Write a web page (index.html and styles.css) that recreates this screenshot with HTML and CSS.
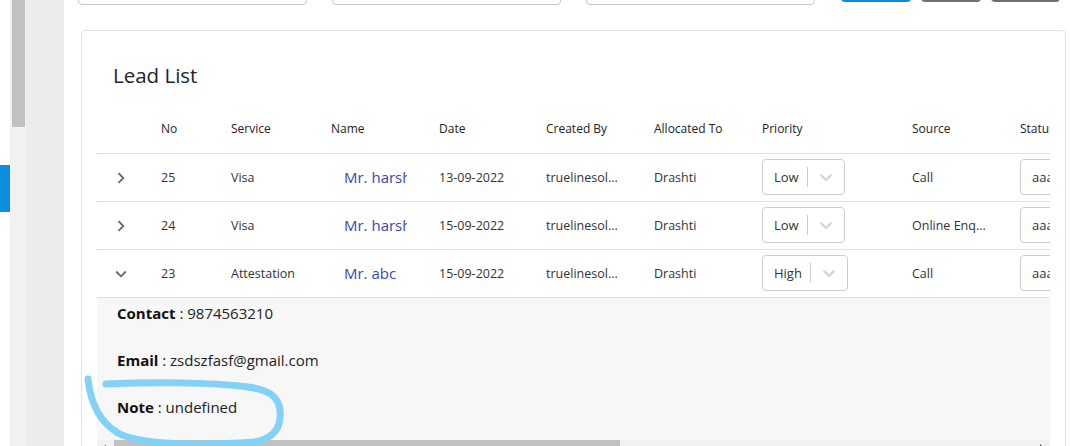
FILE: index.html
```html
<!DOCTYPE html>
<html lang="en">
<head>
<meta charset="utf-8">
<title>Lead List</title>
<link rel="stylesheet" href="styles.css">
</head>
<body>
<div class="page">
  <aside class="sidebar"><div class="active-marker"></div></aside>
  <div class="side-scroll"><div class="side-thumb"></div></div>
  <div class="gutter"></div>
  <main class="main">
    <div class="filters">
      <div class="filter-input"></div>
      <div class="filter-input"></div>
      <div class="filter-input"></div>
      <div class="btns">
        <div class="btn btn-primary"></div>
        <div class="btn btn-secondary"></div>
        <div class="btn btn-secondary w69"></div>
      </div>
    </div>
    <section class="card">
      <h2 class="card-title">Lead List</h2>
      <div class="table-scroll">
        <table class="leads">
          <colgroup>
            <col class="c-exp"><col class="c-no"><col class="c-service"><col class="c-name"><col class="c-date"><col class="c-created"><col class="c-alloc"><col class="c-priority"><col class="c-source"><col class="c-status"><col class="c-rest">
          </colgroup>
          <thead>
            <tr><th></th><th>No</th><th>Service</th><th>Name</th><th>Date</th><th>Created By</th><th>Allocated To</th><th>Priority</th><th>Source</th><th>Status</th><th>Action</th></tr>
          </thead>
          <tbody>
            <tr>
              <td class="exp"><svg width="8" height="12" viewBox="0 0 8 12"><path d="M1.5 1.2 L6.3 6 L1.5 10.8" fill="none" stroke="#666" stroke-width="1.8"/></svg></td>
              <td>25</td><td>Visa</td><td class="name"><span class="name-link">Mr. harsh patel</span></td><td>13-09-2022</td><td>truelinesol...</td><td>Drashti</td>
              <td><div class="select"><span class="sel-val">Low</span><span class="sel-sep"></span><span class="sel-ind"><svg width="20" height="20" viewBox="0 0 20 20"><path d="M4.516 7.548c0.436-0.446 1.043-0.481 1.576 0l3.908 3.747 3.908-3.747c0.533-0.481 1.141-0.446 1.574 0 0.436 0.445 0.408 1.197 0 1.615-0.406 0.418-4.695 4.502-4.695 4.502-0.217 0.223-0.502 0.335-0.787 0.335s-0.57-0.112-0.789-0.335c0 0-4.287-4.084-4.695-4.502s-0.436-1.17 0-1.615z" fill="#d4d4d4"/></svg></span></div></td>
              <td>Call</td><td><div class="status-input">aaa</div></td><td></td>
            </tr>
            <tr>
              <td class="exp"><svg width="8" height="12" viewBox="0 0 8 12"><path d="M1.5 1.2 L6.3 6 L1.5 10.8" fill="none" stroke="#666" stroke-width="1.8"/></svg></td>
              <td>24</td><td>Visa</td><td class="name"><span class="name-link">Mr. harsh patel</span></td><td>15-09-2022</td><td>truelinesol...</td><td>Drashti</td>
              <td><div class="select"><span class="sel-val">Low</span><span class="sel-sep"></span><span class="sel-ind"><svg width="20" height="20" viewBox="0 0 20 20"><path d="M4.516 7.548c0.436-0.446 1.043-0.481 1.576 0l3.908 3.747 3.908-3.747c0.533-0.481 1.141-0.446 1.574 0 0.436 0.445 0.408 1.197 0 1.615-0.406 0.418-4.695 4.502-4.695 4.502-0.217 0.223-0.502 0.335-0.787 0.335s-0.57-0.112-0.789-0.335c0 0-4.287-4.084-4.695-4.502s-0.436-1.17 0-1.615z" fill="#d4d4d4"/></svg></span></div></td>
              <td>Online Enq...</td><td><div class="status-input">aaa</div></td><td></td>
            </tr>
            <tr>
              <td class="exp"><svg width="12" height="8" viewBox="0 0 12 8"><path d="M1.2 1.5 L6 6.3 L10.8 1.5" fill="none" stroke="#666" stroke-width="1.8"/></svg></td>
              <td>23</td><td>Attestation</td><td class="name"><span class="name-link">Mr. abc</span></td><td>15-09-2022</td><td>truelinesol...</td><td>Drashti</td>
              <td><div class="select"><span class="sel-val">High</span><span class="sel-sep"></span><span class="sel-ind"><svg width="20" height="20" viewBox="0 0 20 20"><path d="M4.516 7.548c0.436-0.446 1.043-0.481 1.576 0l3.908 3.747 3.908-3.747c0.533-0.481 1.141-0.446 1.574 0 0.436 0.445 0.408 1.197 0 1.615-0.406 0.418-4.695 4.502-4.695 4.502-0.217 0.223-0.502 0.335-0.787 0.335s-0.57-0.112-0.789-0.335c0 0-4.287-4.084-4.695-4.502s-0.436-1.17 0-1.615z" fill="#d4d4d4"/></svg></span></div></td>
              <td>Call</td><td><div class="status-input">aaa</div></td><td></td>
            </tr>
            <tr class="expanded">
              <td colspan="11">
                <div class="details">
                  <p><b>Contact</b> : 9874563210</p>
                  <p><b>Email</b> : zsdszfasf@gmail.com</p>
                  <p><b>Note</b> : undefined</p>
                </div>
              </td>
            </tr>
          </tbody>
        </table>
      </div>
      <div class="hscroll">
        <span class="hs-arrow left"></span>
        <div class="hs-track"><div class="hs-thumb"></div></div>
        <span class="hs-arrow right"></span>
      </div>
    </section>
  </main>
</div>
<svg class="annotation" width="1070" height="446" viewBox="0 0 1070 446">
  <path d="M88 379 C90 398, 96 420, 118 433 C140 445, 200 446, 254 442 C273 439, 282 428, 280 410 C278 396, 269 390, 248 387 C210 382, 150 382, 106 384" fill="none" stroke="#82d2f6" stroke-width="7" stroke-linecap="round" stroke-linejoin="round"/>
</svg>
</body>
</html>
```

FILE: styles.css
```css
* { box-sizing: border-box; }
html, body { margin: 0; padding: 0; }
body {
  width: 1070px;
  height: 446px;
  overflow: hidden;
  font-family: "Open Sans", "Noto Sans", sans-serif;
  color: #333;
  background: #fff;
  position: relative;
}
.page {
  display: flex;
  height: 446px;
}
.sidebar {
  width: 10px;
  background: #fff;
  flex: none;
}
.active-marker {
  margin-top: 165px;
  height: 47px;
  background: #0a8fe0;
}
.side-scroll {
  width: 16px;
  background: #f1f1f1;
  flex: none;
  padding-left: 2px;
}
.side-thumb {
  width: 13px;
  height: 127px;
  background: #c1c1c1;
}
.gutter {
  width: 38px;
  background: #ebecee;
  flex: none;
}
.main {
  flex: 1;
  background: #fff;
  padding-left: 14px;
  min-width: 0;
}
.filters {
  height: 5px;
  display: flex;
  align-items: flex-end;
  gap: 25px;
  overflow: hidden;
}
.filter-input {
  width: 229px;
  height: 38px;
  border: 1px solid #c8c8c8;
  border-radius: 4px;
  flex: none;
}
.btns {
  display: flex;
  gap: 10px;
  align-items: flex-end;
  margin-left: 1px;
  margin-bottom: 3px;
}
.btn {
  width: 60px;
  height: 36px;
  border-radius: 4px;
  border: 1px solid #6c757d;
}
.btn-primary {
  width: 70px;
  border-color: #0d8bd9;
  border-bottom-width: 2px;
}
.btn-secondary { border-color: #707070; border-bottom-width: 2px; }
.w69 { width: 69px; }
.card {
  margin-top: 25px;
  margin-left: 3px;
  width: 985px;
  height: 430px;
  border: 1px solid #e2e2e2;
  border-radius: 4px;
  padding: 0 15px;
  display: flex;
  flex-direction: column;
}
.card-title {
  margin: 0;
  padding: 30px 16px 16px;
  font-size: 20.5px;
  line-height: 28px;
  font-weight: 400;
  color: #212529;
}
.table-scroll {
  overflow: hidden;
  width: 953px;
}
.leads {
  width: 1500px;
  table-layout: fixed;
  border-collapse: collapse;
}
.c-exp { width: 48px; }
.c-no { width: 70px; }
.c-service { width: 100px; }
.c-name { width: 108px; }
.c-date { width: 107px; }
.c-created { width: 108px; }
.c-alloc { width: 108px; }
.c-priority { width: 150px; }
.c-source { width: 108px; }
.c-status { width: 200px; }
.c-rest { width: 393px; }
.leads th, .leads td {
  height: 48px;
  padding: 0 16px;
  text-align: left;
  vertical-align: middle;
  border-bottom: 1px solid #e0e0e0;
  white-space: nowrap;
  overflow: hidden;
}
.leads th {
  font-size: 12px;
  font-weight: 400;
  color: #222;
}
.leads td {
  font-size: 12.5px;
  color: #333;
}
.leads td.exp {
  padding: 0;
  text-align: center;
}
.exp svg { display: inline-block; vertical-align: middle; }
.leads td.name { overflow: hidden; }
.name-link {
  display: block;
  padding-left: 13px;
  font-size: 15px;
  color: #3949ab;
  overflow: hidden;
  white-space: nowrap;
}
.select {
  display: inline-flex;
  align-items: center;
  height: 36px;
  border: 1px solid #cccccc;
  border-radius: 4px;
  background: #fff;
}
.sel-val {
  padding: 0 8px 0 11px;
  font-size: 13px;
  color: #333;
}
.sel-sep {
  width: 1px;
  height: 20px;
  background: #cccccc;
}
.sel-ind {
  display: flex;
  padding: 0 8px;
}
.status-input {
  width: 160px;
  height: 36px;
  border: 1px solid #cccccc;
  border-radius: 4px;
  padding: 0 11px;
  display: flex;
  align-items: center;
  font-size: 13px;
}
.leads tr.expanded td {
  height: auto;
  padding: 0;
  background: #f7f7f7;
  border-bottom: none;
}
.details {
  padding: 5px 20px 22px;
  font-size: 15px;
  color: #222;
}
.details p {
  margin: 0 0 26px;
  line-height: 21px;
}
.details p:last-child { margin-bottom: 0; }
.details b { font-weight: 700; color: #111; }
.hscroll {
  width: 953px;
  height: 17px;
  display: flex;
  background: #f1f1f1;
  flex: none;
}
.hs-arrow {
  width: 17px;
  height: 17px;
  position: relative;
}
.hs-arrow.left::after, .hs-arrow.right::after {
  content: "";
  position: absolute;
  top: 4px;
  border-top: 4px solid transparent;
  border-bottom: 4px solid transparent;
}
.hs-arrow.left::after { left: 5px; border-right: 4px solid #a3a3a3; }
.hs-arrow.right::after { left: 7px; border-left: 4px solid #505050; }
.hs-track { flex: 1; }
.hs-thumb {
  width: 506px;
  height: 17px;
  background: #c1c1c1;
}
.annotation {
  position: absolute;
  left: 0;
  top: 0;
  pointer-events: none;
}
```
